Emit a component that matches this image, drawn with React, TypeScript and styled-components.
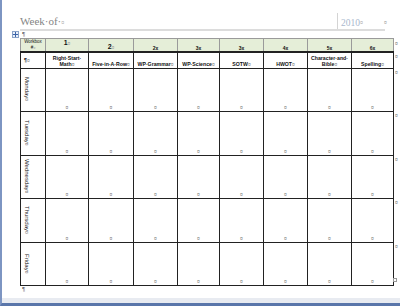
import React from 'react'
import styled, { createGlobalStyle } from 'styled-components'

const GlobalStyle = createGlobalStyle`
  html, body {
    margin: 0;
    padding: 0;
    background: #ffffff;
  }
  body {
    font-family: 'Liberation Sans', Arial, sans-serif;
  }
`

// WINDOW
const Screen = styled.div`
  width: 400px;
  height: 306px;
  box-sizing: border-box;
  display: flex;
  flex-direction: column;
  border-left: 2px solid #7d95c2;
  border-bottom: 3px solid #5a76aa;
  overflow: hidden;
`

const Page = styled.div`
  flex: 1;
  background: #ffffff;
  padding: 13px 0 0 18px;
  position: relative;
`

const BottomBand = styled.div`
  height: 5px;
  background: #e8ebf1;
`

// HEADER
const Header = styled.div`
  display: flex;
  align-items: flex-end;
  width: 365px;
  height: 16px;
  border-bottom: 2px solid #dcdcdc;
`

const WeekOf = styled.div`
  flex: 1;
  font-family: 'Liberation Serif', 'DejaVu Serif', serif;
  font-size: 11px;
  color: #858585;
  line-height: 12px;
`

const Mark = styled.span<{ $size?: number }>`
  font-size: ${p => p.$size || 6}px;
  color: #9a9a9a;
  font-weight: normal;
`

const YearBox = styled.div`
  align-self: stretch;
  display: flex;
  align-items: center;
  border-left: 1px solid #d4d4d4;
  width: 44px;
  padding: 3px 0 0 3px;
  font-family: 'Liberation Serif', 'DejaVu Serif', serif;
  font-size: 9.5px;
  color: #a9b7cd;
`

const HeaderEnd = styled.div`
  position: absolute;
  left: 382px;
  top: 19px;
  font-size: 5px;
  color: #9a9a9a;
`

const Pilcrow = styled.div`
  font-size: 6px;
  line-height: 7px;
  height: 7px;
  color: #555;
  padding-left: 2px;
`

// TABLE
const TableWrap = styled.div`
  position: relative;
`

const MoveHandle = styled.div`
  position: absolute;
  left: -8px;
  top: -7px;
  width: 7px;
  height: 7px;
  box-sizing: border-box;
  border: 1px solid #8aa3c9;
  background: #e9f0fa;
  display: flex;
  align-items: center;
  justify-content: center;
`

const ResizeHandle = styled.div`
  position: absolute;
  left: 373px;
  bottom: 4px;
  width: 4px;
  height: 4px;
  box-sizing: border-box;
  border: 1px solid #999;
  background: #fff;
`

const Table = styled.table`
  border-collapse: collapse;
  table-layout: fixed;
  font-family: 'Liberation Sans', Arial, sans-serif;
`

const HeadRow = styled.tr`
  height: 13px;
`

const HeadCell = styled.td<{ $big?: boolean; $top?: boolean }>`
  background: #e5eed8;
  border: 1px solid #9a9a9a;
  border-bottom: 2px solid #222;
  padding: 0;
  text-align: center;
  vertical-align: ${p => (p.$top ? 'top' : 'bottom')};
  font-weight: bold;
  font-size: ${p => (p.$big ? 7 : 5)}px;
  line-height: ${p => (p.$big ? 7 : 6)}px;
  color: #111;
  overflow: hidden;
`

const WorkboxCell = styled(HeadCell)`
  font-weight: normal;
  font-size: 4.5px;
  line-height: 6px;
  vertical-align: middle;
`

const SubjectRow = styled.tr`
  height: 16px;
`

const DayRow = styled.tr<{ $h: number }>`
  height: ${p => p.$h}px;
`

const Cell = styled.td`
  border: 1px solid #222;
  padding: 0 1px 1px;
  text-align: center;
  vertical-align: bottom;
  font-size: 5px;
  line-height: 6px;
  overflow: hidden;
`

const SubjectCell = styled(Cell)`
  font-weight: bold;
  font-size: 5.2px;
  color: #111;
`

const DayCell = styled(Cell)`
  vertical-align: middle;
  text-align: left;
  padding: 0 0 0 3px;
`

const DayText = styled.div`
  writing-mode: vertical-rl;
  font-size: 6px;
  line-height: 6px;
  color: #222;
`

const EndCell = styled.td`
  border: none;
  padding: 2px 0 0 1px;
  vertical-align: top;
  font-size: 5px;
  line-height: 5px;
  color: #777;
`

const CellMark = styled.span`
  color: #7a7a7a;
  font-size: 5px;
  font-weight: normal;
`

const widths = [25, 43, 45, 44, 42, 44, 44, 44, 42]

const headers = ['2x', '3x', '3x', '4x', '5x', '6x']

const subjects = [
  ['Right·Start·', 'Math'],
  ['Five·in·A·Row'],
  ['WP·Grammar'],
  ['WP·Science'],
  ['SOTW'],
  ['HWOT'],
  ['Character·and·', 'Bible'],
  ['Spelling'],
]

const days = [
  { name: 'Monday', h: 43 },
  { name: 'Tuesday', h: 44 },
  { name: 'Wednesday', h: 43 },
  { name: 'Thursday', h: 44 },
  { name: 'Friday', h: 43 },
]

export default function App() {
  return (
    <>
      <GlobalStyle />
      <Screen>
        <Page>
          <Header>
            <WeekOf>Week·of·<Mark $size={6}>¤</Mark></WeekOf>
            <YearBox>2010<Mark $size={6}>¤</Mark></YearBox>
          </Header>
          <HeaderEnd>¤</HeaderEnd>

          <Pilcrow>¶</Pilcrow>

          <TableWrap>
            <MoveHandle>
              <svg width="5" height="5" viewBox="0 0 5 5">
                <path d="M2.5 0 V5 M0 2.5 H5" stroke="#3c64a8" strokeWidth="1" />
              </svg>
            </MoveHandle>

            <Table>
              <colgroup>
                {widths.map((w, i) => (
                  <col key={i} style={{ width: w }} />
                ))}
                <col style={{ width: 6 }} />
              </colgroup>
              <tbody>
                <HeadRow>
                  <WorkboxCell>
                    Workbox<br />#<Mark $size={4}>¤</Mark>
                  </WorkboxCell>
                  <HeadCell $big $top>1<Mark $size={5}>¤</Mark></HeadCell>
                  <HeadCell $big>2<Mark $size={5}>¤</Mark></HeadCell>
                  {headers.map((h, i) => (
                    <HeadCell key={i}>{h}</HeadCell>
                  ))}
                  <EndCell>¤</EndCell>
                </HeadRow>

                <SubjectRow>
                  <SubjectCell style={{ textAlign: 'left', verticalAlign: 'middle', paddingLeft: 3 }}>
                    ¶<CellMark>¤</CellMark>
                  </SubjectCell>
                  {subjects.map((s, i) => (
                    <SubjectCell key={i}>
                      {s.length > 1 ? <>{s[0]}<br /></> : null}
                      {s[s.length - 1]}
                      <CellMark>¤</CellMark>
                    </SubjectCell>
                  ))}
                  <EndCell>¤</EndCell>
                </SubjectRow>

                {days.map(d => (
                  <DayRow key={d.name} $h={d.h}>
                    <DayCell>
                      <DayText>{d.name}<CellMark>¤</CellMark></DayText>
                    </DayCell>
                    {subjects.map((_, i) => (
                      <Cell key={i}>
                        <CellMark>¤</CellMark>
                      </Cell>
                    ))}
                    <EndCell>¤</EndCell>
                  </DayRow>
                ))}
              </tbody>
            </Table>
            <ResizeHandle />
          </TableWrap>

          <Pilcrow>¶</Pilcrow>
        </Page>
        <BottomBand />
      </Screen>
    </>
  )
}
